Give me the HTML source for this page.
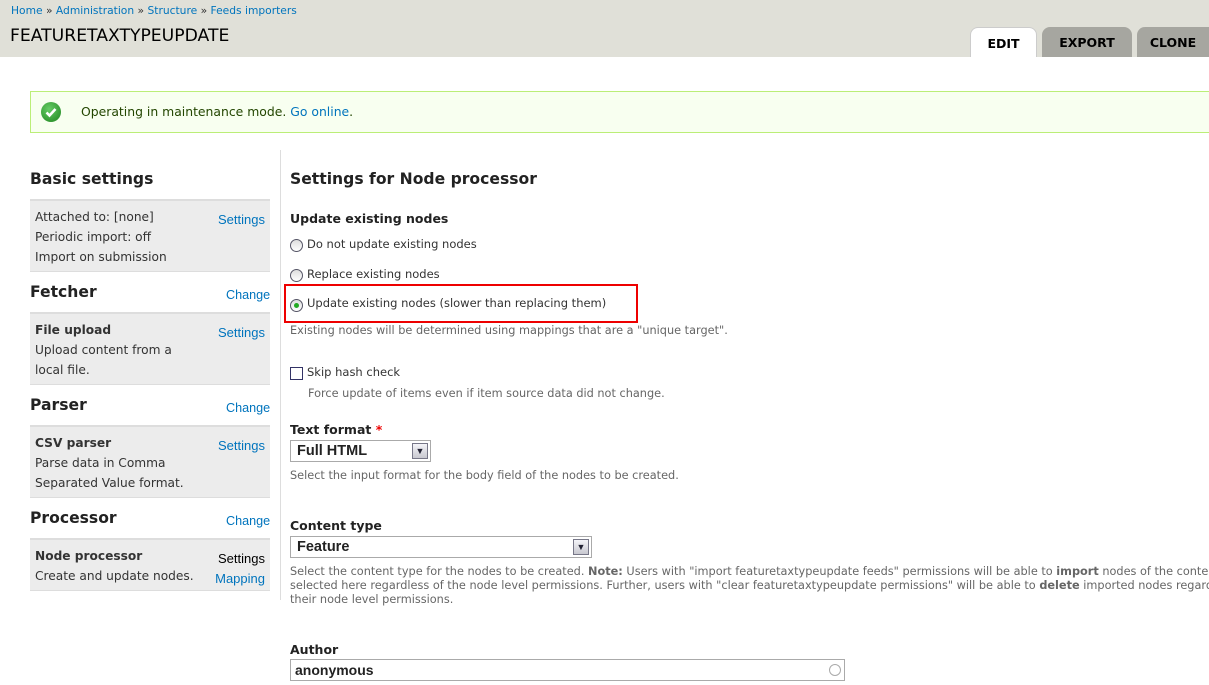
<!DOCTYPE html>
<html><head><meta charset="utf-8"><style>
*{margin:0;padding:0;box-sizing:border-box}
body{width:1209px;height:685px;overflow:hidden;background:#fff;font-family:"DejaVu Sans",Verdana,sans-serif;color:#333;position:relative;font-size:12px}
.a{position:absolute;white-space:nowrap}
a,.l{color:#0074bd;text-decoration:none}
.ar{font-family:"Liberation Sans",Arial,sans-serif}
#hd{position:absolute;left:0;top:0;width:1209px;height:57px;background:#e0e0d8}
.tab{position:absolute;top:27px;height:30px;border-radius:8px 8px 0 0;font-weight:bold;font-size:12.5px;text-align:center;line-height:31px;color:#000}
.sbh{font-size:15.6px;font-weight:bold;color:#222}
.box{position:absolute;left:30px;width:240px;background:#ececec;border-top:2px solid #ddd;border-bottom:1px solid #ddd}
.box div{position:absolute;white-space:nowrap}
.desc{font-size:11.3px;color:#666}
.rad{position:absolute;width:13px;height:13px;border:1px solid #556;border-radius:50%;background:linear-gradient(#ddd,#fff)}
.lab{font-size:12.5px;font-weight:bold;color:#222}
.sel{position:absolute;border:1px solid #aaa;background:#fff;font-family:"Liberation Sans",Arial,sans-serif;font-weight:bold;font-size:14.5px;color:#222;padding-left:6px;line-height:20px}
.sel i{position:absolute;right:2px;top:2px;width:16px;height:16px;border:1px solid #778;background:linear-gradient(#f4f4f8,#c8c8d0);font-style:normal;font-size:9px;line-height:14px;text-align:center;color:#223}
</style></head><body>
<div id="hd"></div>
<div class="a" style="left:11px;top:4px;font-size:10.7px"><a>Home</a> » <a>Administration</a> » <a>Structure</a> » <a>Feeds importers</a></div>
<div class="a" style="left:10px;top:26px;font-size:17.2px;color:#000">FEATURETAXTYPEUPDATE</div>
<div class="tab" style="left:970px;width:67px;background:#fff;border:1px solid #ccc;border-bottom:none">EDIT</div>
<div class="tab" style="left:1042px;width:90px;background:#a6a6a0">EXPORT</div>
<div class="tab" style="left:1137px;width:80px;background:#a6a6a0;padding-right:8px">CLONE</div>

<div class="a" style="left:30px;top:91px;width:1190px;height:42px;background:#f8fff0;border:1px solid #bbee77"></div>
<div class="a" style="left:41px;top:102px;width:20px;height:20px;border-radius:50%;background:radial-gradient(circle at 40% 35%,#6c6,#393 70%)"><svg width="20" height="20"><path d="M5.5 10.5l3 3 6-6.5" stroke="#fff" stroke-width="2.6" fill="none"/></svg></div>
<div class="a" style="left:81px;top:104px;color:#234600;font-size:12.4px">Operating in maintenance mode. <a>Go online</a>.</div>

<div class="a" style="left:280px;top:150px;width:1px;height:450px;background:#ddd"></div>

<div class="a sbh" style="left:30px;top:170px">Basic settings</div>
<div class="box" style="top:199px;height:73px"><div style="left:5px;top:6px;line-height:20px;font-size:12.2px">Attached to: [none]<br>Periodic import: off<br>Import on submission</div><div class="ar l" style="right:5px;top:11px;font-size:13px">Settings</div></div>
<div class="a sbh" style="left:30px;top:283px">Fetcher</div><div class="a ar l" style="left:226px;top:288px;font-size:12.6px">Change</div>
<div class="box" style="top:312px;height:73px"><div style="left:5px;top:6px;line-height:20px;font-size:12.2px"><b>File upload</b><br>Upload content from a<br>local file.</div><div class="ar l" style="right:5px;top:11px;font-size:13px">Settings</div></div>
<div class="a sbh" style="left:30px;top:396px">Parser</div><div class="a ar l" style="left:226px;top:401px;font-size:12.6px">Change</div>
<div class="box" style="top:425px;height:73px"><div style="left:5px;top:6px;line-height:20px;font-size:12.2px"><b>CSV parser</b><br>Parse data in Comma<br>Separated Value format.</div><div class="ar l" style="right:5px;top:11px;font-size:13px">Settings</div></div>
<div class="a sbh" style="left:30px;top:509px">Processor</div><div class="a ar l" style="left:226px;top:514px;font-size:12.6px">Change</div>
<div class="box" style="top:538px;height:53px"><div style="left:5px;top:6px;line-height:20px;font-size:12.2px"><b>Node processor</b><br>Create and update nodes.</div><div class="ar" style="right:5px;top:11px;font-size:13px;color:#000">Settings</div><div class="ar l" style="right:5px;top:31px;font-size:13px">Mapping</div></div>

<div class="a sbh" style="left:290px;top:170px">Settings for Node processor</div>
<div class="a lab" style="left:290px;top:211px">Update existing nodes</div>
<div class="rad" style="left:290px;top:239px"></div><div class="a" style="left:307px;top:237px;font-size:11.5px">Do not update existing nodes</div>
<div class="rad" style="left:290px;top:269px"></div><div class="a" style="left:307px;top:267px;font-size:11.5px">Replace existing nodes</div>
<div class="a" style="left:284px;top:284px;width:354px;height:39px;border:2px solid #e00"></div>
<div class="rad" style="left:290px;top:299px"></div><div class="a" style="left:294px;top:303px;width:5px;height:5px;border-radius:50%;background:#2a2"></div>
<div class="a" style="left:307px;top:296px;font-size:11.5px">Update existing nodes (slower than replacing them)</div>
<div class="a desc" style="left:290px;top:324px">Existing nodes will be determined using mappings that are a "unique target".</div>
<div class="a" style="left:290px;top:367px;width:13px;height:13px;border:1px solid #336;background:#fff"></div>
<div class="a" style="left:307px;top:365px;font-size:11.5px">Skip hash check</div>
<div class="a desc" style="left:308px;top:387px">Force update of items even if item source data did not change.</div>

<div class="a lab" style="left:290px;top:422px">Text format <span style="color:#e00">*</span></div>
<div class="sel" style="left:290px;top:440px;width:141px;height:22px">Full HTML<i>&#9660;</i></div>
<div class="a desc" style="left:290px;top:469px">Select the input format for the body field of the nodes to be created.</div>

<div class="a lab" style="left:290px;top:518px">Content type</div>
<div class="sel" style="left:290px;top:536px;width:302px;height:22px">Feature<i>&#9660;</i></div>
<div class="a desc" style="left:290px;top:565px;line-height:14px">Select the content type for the nodes to be created. <b>Note:</b> Users with "import featuretaxtypeupdate feeds" permissions will be able to <b>import</b> nodes of the content type<br>selected here regardless of the node level permissions. Further, users with "clear featuretaxtypeupdate permissions" will be able to <b>delete</b> imported nodes regardless of<br>their node level permissions.</div>

<div class="a lab" style="left:290px;top:642px">Author</div>
<div class="sel" style="left:290px;top:659px;width:555px;height:22px;padding-left:4px;font-size:14px">anonymous<span style="position:absolute;right:3px;top:4px;width:12px;height:12px;border:1px solid #aaa;border-radius:50%"></span></div>
</body></html>
